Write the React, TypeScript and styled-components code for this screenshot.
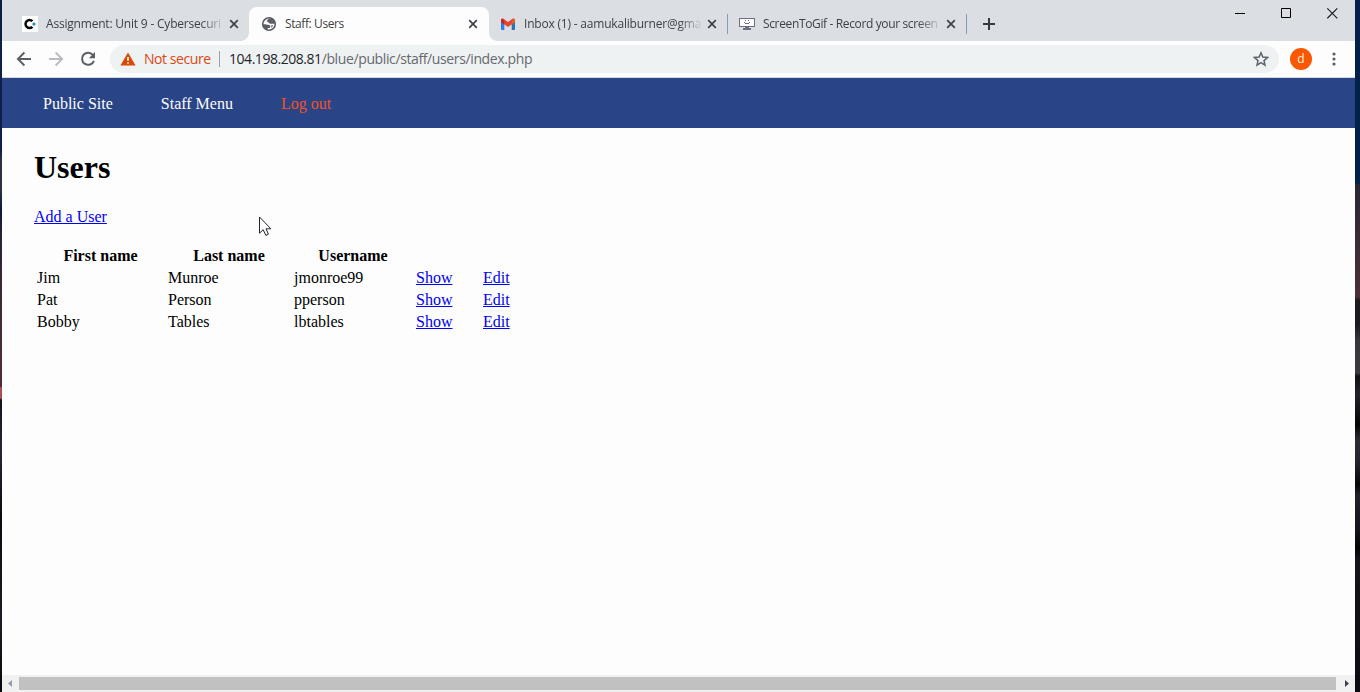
import React from "react";
import styled, { createGlobalStyle, css } from "styled-components";

const GlobalStyle = createGlobalStyle`
  * { box-sizing: border-box; }
  body { margin: 0; overflow: hidden; background: #0a0c12; }
`;

const UI = `"Open Sans", "Noto Sans", sans-serif`;
const SERIF = `"Liberation Serif", "Times New Roman", serif`;

const Desktop = styled.div`
  display: flex;
  width: 1360px;
  height: 692px;
  overflow: hidden;
`;
const LeftEdge = styled.div`
  width: 2px;
  background: linear-gradient(#0c2049 0 150px, #2c3148 160px 190px, #10183a 210px, #2c2434 240px, #4a2d38 350px,
    #4a2d38 386px, #a85056 388px 398px, #15131c 400px, #262633 450px, #0b0a12 520px, #1c1d26 620px, #08080c 692px);
`;
const RightEdge = styled.div`
  width: 5px;
  background: linear-gradient(#03204a 0 183px, #2a2633 185px, #4b3038 297px, #1c1b20 300px 325px, #37363c 340px,
    #3a3a40 373px, #111114 376px, #222228 395px, #050507 425px, #2d2c34 440px, #26252d 460px, #070709 485px,
    #22212a 495px, #14141c 530px, #040405 548px, #15141b 560px, #0c0c10 692px);
`;
const BrowserWindow = styled.div`
  display: flex;
  flex-direction: column;
  width: 1353px;
  height: 692px;
  background: #fdfdfd;
`;

const TabStrip = styled.div`
  display: flex;
  height: 41px;
  padding: 7px 0 0 7px;
  background: #dbdee3;
`;
const TabItem = styled.div<{ $active?: boolean; $divider?: boolean; $w: number; $pad: number }>`
  position: relative;
  display: flex;
  align-items: center;
  width: ${(p) => p.$w}px;
  height: 34px;
  padding: 0 ${(p) => (p.$pad === 13 ? 10 : 11)}px 0 ${(p) => p.$pad}px;
  border-radius: 8px 8px 0 0;
  ${(p) =>
    p.$active &&
    css`
      background: #fdfdfd;
      &::before,
      &::after {
        content: "";
        position: absolute;
        bottom: 0;
        width: 8px;
        height: 8px;
      }
      &::before {
        left: -8px;
        background: radial-gradient(circle at 0 0, transparent 7.5px, #fdfdfd 8px);
      }
      &::after {
        right: -8px;
        background: radial-gradient(circle at 100% 0, transparent 7.5px, #fdfdfd 8px);
      }
    `}
  ${(p) =>
    p.$divider &&
    css`
      background: linear-gradient(#839cb9, #839cb9) right 7px / 1px 20px no-repeat;
      border-radius: 0;
    `}
`;
const TabTitle = styled.span<{ $ls: number; $fade?: boolean }>`
  flex: 1;
  margin: 0 6px 0 8px;
  overflow: hidden;
  white-space: nowrap;
  font: 12px/20px ${UI};
  letter-spacing: ${(p) => p.$ls}px;
  color: #3e4146;
  ${(p) => p.$fade && css`mask-image: linear-gradient(90deg, #000 calc(100% - 22px), rgba(0, 0, 0, 0.1));`}
`;
const NewTab = styled.div`
  display: flex;
  align-items: center;
  padding-left: 16px;
`;
const Controls = styled.div`
  display: flex;
  gap: 35px;
  height: 13px;
  margin: 0 17px 0 auto;
`;

const Toolbar = styled.div`
  display: flex;
  align-items: center;
  height: 37px;
  padding-left: 14px;
  border-bottom: 1px solid #d3d6da;
`;
const NavIcons = styled.div`
  display: flex;
  gap: 16px;
`;
const AddressBar = styled.div`
  display: flex;
  align-items: center;
  width: 1169px;
  height: 28px;
  margin-left: 14px;
  padding: 0 10px;
  border-radius: 14px;
  background: #eff2f3;
  font: 14px/20px ${UI};
  white-space: nowrap;
`;
const Warning = styled.span`
  width: 68px;
  margin-left: 8px;
  color: #dd4814;
  letter-spacing: -0.43px;
`;
const Separator = styled.i`
  width: 1px;
  height: 16px;
  margin: 0 9px 0 7px;
  background: #9aa0a8;
`;
const Url = styled.span`
  flex: 1;
  color: #65686c;
  letter-spacing: -0.38px;
`;
const Host = styled.span`
  color: #232427;
  letter-spacing: -0.46px;
`;
const Avatar = styled.div`
  width: 22px;
  height: 22px;
  margin: 0 20px 0 11px;
  border-radius: 50%;
  background: #fa5800;
  color: #fff3e5;
  font: 500 12px/22px ${UI};
  text-align: center;
`;

const SiteNav = styled.nav`
  display: flex;
  gap: 48px;
  height: 50px;
  padding: 17px 0 0 41px;
  background: #294487;
  font: 16px/18px ${SERIF};
`;
const NavLink = styled.a<{ $accent?: boolean }>`
  color: ${(p) => (p.$accent ? "#f4511e" : "#fdfdfd")};
`;
const Main = styled.main`
  flex: 1;
  padding: 21px 0 0 32px;
  font: 16px/18px ${SERIF};
  color: #000;
`;
const Heading = styled.h1`
  margin: 0 0 23px;
  font: bold 32px/36px ${SERIF};
`;
const Link = styled.a`
  color: #0000f4;
  text-decoration: underline;
`;
const Table = styled.table`
  width: 528px;
  margin-top: 18px;
  table-layout: fixed;
  border-spacing: 2px;
  th, td { height: 20px; padding: 1px; }
  td { text-align: left; }
`;
const Col = styled.col<{ $w: number }>`
  width: ${(p) => p.$w}px;
`;

const ScrollBar = styled.div`
  display: flex;
  align-items: center;
  height: 17px;
  background: #f1f1f1;
`;
const ScrollButton = styled.div<{ $end?: boolean }>`
  display: flex;
  justify-content: flex-start;
  width: 17px;
  padding-left: ${(p) => (p.$end ? 9 : 6)}px;
`;
const Thumb = styled.div`
  width: 1317px;
  height: 13px;
  background: #c1c1c1;
`;
const Pointer = styled.svg`
  position: absolute;
  left: 259px;
  top: 216px;
`;

const Cross = () => (
  <svg width="10" height="10" viewBox="0 0 10 10">
    <path d="M1.2 1.2l7.6 7.6M8.8 1.2L1.2 8.8" stroke="#3f4249" strokeWidth="1.7" />
  </svg>
);
const CanvasIcon = () => (
  <svg width="16" height="16" viewBox="0 0 16 16">
    <rect width="16" height="16" fill="#fff" />
    <path d="M10.4 5.2A4 4 0 1 0 10.4 10.8" fill="none" stroke="#08090c" strokeWidth="2.5" />
    <circle cx="12" cy="8" r="1.6" fill="#168bc5" />
  </svg>
);
const GlobeIcon = () => (
  <svg width="16" height="16" viewBox="0 0 16 16">
    <circle cx="8" cy="8" r="7.1" fill="#5c5e66" />
    <path
      d="M9.6 2.6C7.4 2.8 5.9 4 6 5.2c.1 1 1.7.9 2.2 1.7.4.7 1.6.9 2.6.9h2.7c.1 2.6-1.7 4.9-4.2 5.5-.9.2-2 .1-2.6-.1V12c1.6.1 2.6-.3 2.7-1.3.1-1.1-.9-1.8-2.3-1.9C5.4 8.700 4.700 8.100 2.500 8.300 2.500 6.200 3.500 4.600 5.100 3.500 6.500 2.600 8.200 2.300 9.600 2.600z"
      fill="#fdfdfd"
    />
    <path d="M10.200 9.200h1.800c-.2 1.200-.9 2.100-1.900 2.600.4-.8.5-1.700.1-2.600z" fill="#5c5e66" />
  </svg>
);
const MailIcon = () => (
  <svg width="16" height="16" viewBox="0 0 16 16">
    <path d="M1 4.5l3.3 2.4V14H2a1 1 0 0 1-1-1z" fill="#2c7cec" />
    <path d="M15 4.5l-3.3 2.4V14H14a1 1 0 0 0 1-1z" fill="#2277b4" />
    <path d="M1 6V4.2C1 2.7 2.6 2 3.8 2.9L8 6l4.2-3.1C13.4 2 15 2.7 15 4.2V6L8 11z" fill="#e54430" />
    <path d="M1 6V4.2c0-1 .7-1.5 1.4-1.5L4.3 5v3.4z" fill="#c8221e" />
    <path d="M15 6V4.2c0-1-.7-1.5-1.4-1.5L11.7 5v3.4z" fill="#e5611e" />
  </svg>
);
const MonitorIcon = () => (
  <svg width="16" height="16" viewBox="0 0 16 16" shapeRendering="crispEdges">
    <path d="M.5 2.5h15v8H.5z" fill="#fff" stroke="#706d82" />
    <path d="M6 4h1v1H6zM9 4h1v1H9zM5 6h1v1H5zM10 6h1v1h-1zM6 7h4v1H6zM6 11h4v1H6zM4 12h8v2H4z" fill="#706d82" />
  </svg>
);
const BackIcon = ({ color }: { color: string }) => (
  <svg width="16" height="16" viewBox="0 0 16 16">
    <path d="M15 8H2M8.4 1.5L1.9 8l6.5 6.5" fill="none" stroke={color} strokeWidth="1.9" />
  </svg>
);
const ForwardIcon = ({ color }: { color: string }) => (
  <svg width="16" height="16" viewBox="0 0 16 16">
    <path d="M1 8h13M7.6 1.5L14.1 8l-6.500 6.500" fill="none" stroke={color} strokeWidth="1.9" />
  </svg>
);
const ReloadIcon = () => (
  <svg width="16" height="16" viewBox="0 0 16 16">
    <path d="M13.2 4.3A6.1 6.1 0 1 0 13.9 9.8" fill="none" stroke="#5b5e66" strokeWidth="2" />
    <path d="M15 1v6.2H8.8z" fill="#5b5e66" />
  </svg>
);
const WarningIcon = () => (
  <svg width="16" height="14" viewBox="0 0 16 14">
    <path d="M8 .5l7.6 13H.4z" fill="#d94a05" />
    <path d="M7.2 5h1.6v3.8H7.2zM7.2 10.2h1.6v1.6H7.2z" fill="#fff" />
  </svg>
);
const StarIcon = () => (
  <svg width="16" height="16" viewBox="0 0 16 16">
    <path d="M8 1.8l1.8 4.3 4.7.4-3.5 3.1 1 4.5L8 11.7l-4 2.4 1-4.5-3.5-3.1 4.7-.4z" fill="none" stroke="#5d646e" strokeWidth="1.5" />
  </svg>
);

const tabs = [
  { title: "Assignment: Unit 9 - Cybersecuri", icon: <CanvasIcon />, w: 240, pad: 13, ls: -0.2, fade: true },
  { title: "Staff: Users", icon: <GlobeIcon />, w: 240, pad: 12, ls: -0.4, active: true },
  { title: "Inbox (1) - aamukaliburner@gma", icon: <MailIcon />, w: 239, pad: 11, ls: -0.2, fade: true, divider: true },
  { title: "ScreenToGif - Record your screen", icon: <MonitorIcon />, w: 239, pad: 11, ls: -0.36, fade: true, divider: true },
];

const users = [
  ["Jim", "Munroe", "jmonroe99"],
  ["Pat", "Person", "pperson"],
  ["Bobby", "Tables", "lbtables"],
];

export default function App() {
  return (
    <Desktop>
      <GlobalStyle />
      <LeftEdge />
      <BrowserWindow>
        <TabStrip>
          {tabs.map((t) => (
            <TabItem key={t.title} $w={t.w} $pad={t.pad} $active={t.active} $divider={t.divider}>
              {t.icon}
              <TabTitle $ls={t.ls} $fade={t.fade}>{t.title}</TabTitle>
              <Cross />
            </TabItem>
          ))}
          <NewTab>
            <svg width="12" height="12" viewBox="0 0 12 12">
              <path d="M0 6h12M6 0v12" stroke="#37393e" strokeWidth="2" />
            </svg>
          </NewTab>
          <Controls>
            <svg width="11" height="13" viewBox="0 0 11 13"><path d="M0 6.5h10" stroke="#000" /></svg>
            <svg width="11" height="13" viewBox="0 0 11 13"><path d="M.5 1.5h9v9h-9z" fill="none" stroke="#000" /></svg>
            <svg width="11" height="13" viewBox="0 0 11 13"><path d="M.3 1.3l10 10M10.3 1.3l-10 10" stroke="#15161a" strokeWidth="1.1" /></svg>
          </Controls>
        </TabStrip>
        <Toolbar>
          <NavIcons>
            <BackIcon color="#5b5e66" />
            <ForwardIcon color="#b9bbbe" />
            <ReloadIcon />
          </NavIcons>
          <AddressBar>
            <WarningIcon />
            <Warning>Not secure</Warning>
            <Separator />
            <Url><Host>104.198.208.81</Host>/blue/public/staff/users/index.php</Url>
            <StarIcon />
          </AddressBar>
          <Avatar>d</Avatar>
          <svg width="4" height="14" viewBox="0 0 4 14" fill="#5b5e66">
            <circle cx="2" cy="2" r="1.6" /><circle cx="2" cy="7" r="1.6" /><circle cx="2" cy="12" r="1.6" />
          </svg>
        </Toolbar>
        <SiteNav>
          <NavLink>Public Site</NavLink>
          <NavLink>Staff Menu</NavLink>
          <NavLink $accent>Log out</NavLink>
        </SiteNav>
        <Main>
          <Heading>Users</Heading>
          <Link>Add a User</Link>
          <Table>
            <colgroup>
              <Col $w={129} /><Col $w={124} /><Col $w={120} /><Col $w={65} /><Col $w={78} />
            </colgroup>
            <thead>
              <tr><th>First name</th><th>Last name</th><th>Username</th><th /><th /></tr>
            </thead>
            <tbody>
              {users.map((u) => (
                <tr key={u[2]}>
                  {u.map((cell) => <td key={cell}>{cell}</td>)}
                  <td><Link>Show</Link></td>
                  <td><Link>Edit</Link></td>
                </tr>
              ))}
            </tbody>
          </Table>
        </Main>
        <ScrollBar>
          <ScrollButton><svg width="4" height="7" viewBox="0 0 4 7"><path d="M4 0v7L0 3.5z" fill="#8f9bad" /></svg></ScrollButton>
          <Thumb />
          <ScrollButton $end><svg width="4" height="7" viewBox="0 0 4 7"><path d="M0 0v7l4-3.500z" fill="#3f424c" /></svg></ScrollButton>
        </ScrollBar>
      </BrowserWindow>
      <RightEdge />
      <Pointer width="13" height="21" viewBox="0 0 13 21">
        <path d="M.5 1v16.2l3.7-3.5 2.6 5.7 2.6-1.2L7 12.8h4.9z" fill="#fff" stroke="#24252d" />
      </Pointer>
    </Desktop>
  );
}
